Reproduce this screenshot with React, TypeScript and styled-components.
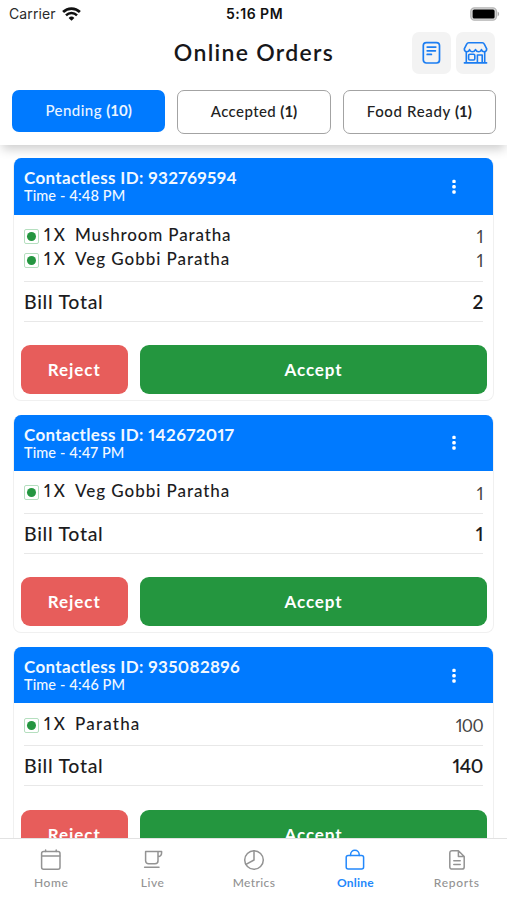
import React from "react";
import styled, { createGlobalStyle } from "styled-components";

const Global = createGlobalStyle`
  * { box-sizing: border-box; }
  body { margin: 0; background: #fff; font-family: Lato, sans-serif; font-variant-numeric: proportional-nums; }
  button { font-family: inherit; border: 0; padding: 0; cursor: pointer; }
`;

const BLUE = "#007aff";

const Screen = styled.div`
  width: 507px;
  height: 900px;
  display: flex;
  flex-direction: column;
  overflow: hidden;
  color: #1c1c1e;
  background: #fff;
`;

const Header = styled.header`
  flex: none;
  height: 145px;
  position: relative;
  z-index: 1;
  background: #fff;
  box-shadow: 0 6px 10px -2px rgba(0, 0, 0, 0.2);
`;

const StatusBar = styled.div`
  height: 27px;
  padding: 0 7px 0 9px;
  display: grid;
  grid-template-columns: 1fr auto 1fr;
  align-items: center;
  font: 14px Inter, sans-serif;
`;

const Carrier = styled.span`
  display: flex;
  align-items: center;
  gap: 6px;
  letter-spacing: 0.1px;
  color: #2b2b2b;
`;

const Clock = styled.span`
  font-weight: 600;
  letter-spacing: 0.5px;
  color: #111;
`;

const BatterySlot = styled.span`
  display: flex;
  justify-content: flex-end;
`;

const TitleRow = styled.div`
  height: 51px;
  padding: 0 12px;
  display: grid;
  grid-template-columns: 83px 1fr 83px;
  align-items: center;
`;

const Title = styled.h1`
  grid-column: 2;
  margin: -2px 0 0 1px;
  text-align: center;
  font-size: 23px;
  line-height: 28px;
  font-weight: 600;
  letter-spacing: 1.3px;
  color: #17171a;
`;

const Actions = styled.div`
  display: flex;
  gap: 5px;
`;

const IconButton = styled.button`
  width: 39px;
  height: 42px;
  display: grid;
  place-items: center;
  border-radius: 7px;
  background: #f3f3f3;
  color: #1b7df2;
`;

const Tabs = styled.nav`
  padding: 12px 11px 0 12px;
  display: grid;
  grid-template-columns: repeat(3, 1fr);
  column-gap: 12px;
  align-items: start;
`;

const Tab = styled.button<{ $active?: boolean; $spacing: number }>`
  height: ${(p) => (p.$active ? 41.5 : 44)}px;
  padding: 0 0 2px;
  border-radius: 7px;
  border: ${(p) => (p.$active ? "0" : "1px solid #a3a3a3")};
  background: ${(p) => (p.$active ? BLUE : "#fff")};
  color: ${(p) => (p.$active ? "#eaf4ff" : "#222")};
  font-size: 15px;
  font-weight: 500;
  letter-spacing: ${(p) => p.$spacing}px;
`;

const Count = styled.b`
  font-weight: 700;
  letter-spacing: 0;
`;

const List = styled.main`
  flex: 1;
  min-height: 0;
  overflow: hidden;
  padding: 13.3px 13px 0;
  display: flex;
  flex-direction: column;
  gap: 14px;
`;

const Card = styled.article`
  flex: none;
  border: 1px solid #f0f0f0;
  border-top: 0;
  border-radius: 8px;
  overflow: hidden;
  padding-bottom: 6px;
`;

const CardHead = styled.div`
  height: 56.3px;
  padding: 9px 36px 0 10px;
  display: flex;
  justify-content: space-between;
  background: ${BLUE};
  color: #f1f8ff;
`;

const OrderId = styled.div`
  font-size: 17px;
  line-height: 21px;
  font-weight: 700;
  letter-spacing: 0.35px;
`;

const OrderTime = styled.div`
  font-size: 14.5px;
  line-height: 16px;
  font-weight: 500;
  letter-spacing: 0.1px;
`;

const Dots = styled.svg`
  margin-top: 10.5px;
`;

const Items = styled.div`
  margin: 0 10px;
  padding: 7.7px 0 9.8px;
  border-bottom: 1.5px solid #e8e8e8;
`;

const Item = styled.div`
  height: 24.3px;
  display: flex;
  align-items: center;
  font-size: 17px;
  font-weight: 500;
`;

const VegMark = styled.span`
  width: 15px;
  height: 15px;
  margin-top: 4px;
  display: grid;
  place-items: center;
  border: 1px solid #b5dfbf;
  border-radius: 2px;

  &::after {
    content: "";
    width: 9px;
    height: 9px;
    border-radius: 50%;
    background: #249640;
  }
`;

const Quantity = styled.span`
  width: 31px;
  margin-left: 5px;
  letter-spacing: -0.2px;
  word-spacing: -1px;
`;

const ItemName = styled.span<{ $spacing: number }>`
  flex: 1;
  letter-spacing: ${(p) => p.$spacing}px;
`;

const ItemPrice = styled.span`
  margin-top: 4px;
  font-weight: 400;
  letter-spacing: -0.6px;
  color: #444;
`;

const Total = styled.div`
  height: 40px;
  margin: 0 10px;
  display: flex;
  justify-content: space-between;
  align-items: center;
  border-bottom: 1.5px solid #e8e8e8;
  font-size: 19.5px;
  font-weight: 500;
  letter-spacing: 0.7px;
`;

const Amount = styled.span`
  font-size: 19px;
  font-weight: 600;
  letter-spacing: -0.4px;
`;

const Buttons = styled.div`
  padding: 23.5px 6px 0 6.5px;
  display: grid;
  grid-template-columns: 107.5px 1fr;
  gap: 12px;
`;

const ActionButton = styled.button<{ $tone: string }>`
  height: 48.7px;
  border-radius: 9px;
  background: ${(p) => p.$tone};
  color: #fff;
  font-size: 17px;
  font-weight: 700;
  letter-spacing: 0.9px;
`;

const BottomNav = styled.nav`
  flex: none;
  height: 62px;
  border-top: 1px solid #e2e2e2;
  background: #fff;
  display: grid;
  grid-template-columns: repeat(5, 1fr);
`;

const NavItem = styled.a<{ $active?: boolean; $spacing: number }>`
  padding: 9px 0 0 1px;
  display: flex;
  flex-direction: column;
  align-items: center;
  gap: 3px;
  color: ${(p) => (p.$active ? "#2388fb" : "#939393")};
  font-size: 12px;
  line-height: 16px;
  font-weight: ${(p) => (p.$active ? 700 : 500)};
  letter-spacing: ${(p) => p.$spacing}px;
`;

const NavSvg = styled.svg`
  width: 24px;
  height: 24px;
  fill: none;
  stroke: currentColor;
  stroke-width: 1.5;
  stroke-linecap: round;
  stroke-linejoin: round;
`;

const Wifi = () => (
  <svg width="19" height="14" viewBox="0 0 19 14" fill="none" stroke="#111">
    <path d="M1.1 5a12 12 0 0 1 16.8 0" strokeWidth="2.7" />
    <path d="M4 8.3a7.8 7.8 0 0 1 11 0" strokeWidth="2.5" />
    <path d="M6.6 10.9a4.1 4.1 0 0 1 5.8 0L9.5 13.8z" fill="#111" stroke="none" />
  </svg>
);

const Battery = () => (
  <svg width="30" height="14" viewBox="0 0 30 14">
    <rect x=".8" y=".8" width="25.6" height="12.4" rx="3.6" fill="#ddd" stroke="#b5b5b5" strokeWidth="1.3" />
    <rect x="2.6" y="2.5" width="22" height="9" rx="1.6" fill="#000" />
    <path d="M27.6 4.6c2 .8 2 4 0 4.8z" fill="#aaa" />
  </svg>
);

const NoteIcon = () => (
  <svg width="20" height="24" viewBox="0 0 20 24" fill="none" stroke="currentColor" strokeWidth="1.7" strokeLinecap="round">
    <rect x="1.3" y="1.6" width="16.2" height="20.4" rx="3" />
    <path d="M5.2 6.1h8.6M5.2 9.8h8.2M5.2 13.4h4.2" />
  </svg>
);

const StoreIcon = () => (
  <svg width="26" height="24" viewBox="0 0 26 24" fill="none" stroke="currentColor" strokeWidth="1.6" strokeLinecap="round" strokeLinejoin="round">
    <path d="M5.7 1.8h13.6c1 0 1.6.4 2 1.4l2.4 4.6c0 1.9-1 3-2.6 3s-2.3-.9-2.7-2.2c-.4 1.4-1.4 2.2-2.9 2.2s-2.5-.8-3-2.2c-.5 1.4-1.5 2.2-3 2.2s-2.5-.8-2.9-2.2c-.4 1.3-1.1 2.2-2.7 2.2s-2.6-1.1-2.6-3l2.4-4.6c.4-1 1-1.4 2-1.4z" />
    <path d="M3.3 11v10.6M21.7 11v10.6M1.4 21.9h22.2M14.4 21.6v-7.6h4.8v7.6" />
    <rect x="5.6" y="13.2" width="6.2" height="5.8" rx="1.2" />
  </svg>
);

const HomeIcon = () => (
  <NavSvg viewBox="0 0 24 24">
    <rect x="2.6" y="3.4" width="18.4" height="17.8" rx="2" />
    <path d="M2.8 8h18M6.6 2v1.4M17.2 2v1.4" />
  </NavSvg>
);

const CupIcon = () => (
  <NavSvg viewBox="0 0 24 24">
    <path d="M4.6 3.4h12.4v9.4a3 3 0 0 1-3 3H7.6a3 3 0 0 1-3-3zM17 3.4h3.6v1.4a4 4 0 0 1-3.6 4M3.6 19.2h14.4" />
  </NavSvg>
);

const ChartIcon = () => (
  <NavSvg viewBox="0 0 24 24">
    <circle cx="12" cy="12" r="9.3" />
    <path d="M12 2.7V12l-8 4.4" />
  </NavSvg>
);

const BagIcon = () => (
  <NavSvg viewBox="0 0 24 24">
    <rect x="3.2" y="7.6" width="17.4" height="13.4" rx="2" />
    <path d="M7.6 7.4V6.6a4.3 4.3 0 0 1 8.6 0v.8" />
  </NavSvg>
);

const ReportIcon = () => (
  <NavSvg viewBox="0 0 24 24">
    <path d="M13.4 2.7H7a2.2 2.2 0 0 0-2.2 2.2v14a2.2 2.2 0 0 0 2.2 2.2h10a2.2 2.2 0 0 0 2.2-2.2V8.5zM13.4 2.7v5.8h5.8M8.8 12.8h6.4M8.8 16.6h6.4" />
  </NavSvg>
);

interface Line {
  name: string;
  price: string;
  spacing: number;
}

interface Order {
  id: string;
  time: string;
  lines: Line[];
  total: string;
}

const orders: Order[] = [
  {
    id: "932769594",
    time: "4:48 PM",
    lines: [
      { name: "Mushroom Paratha", price: "1", spacing: 0.85 },
      { name: "Veg Gobbi Paratha", price: "1", spacing: 0.95 },
    ],
    total: "2",
  },
  { id: "142672017", time: "4:47 PM", lines: [{ name: "Veg Gobbi Paratha", price: "1", spacing: 0.95 }], total: "1" },
  { id: "935082896", time: "4:46 PM", lines: [{ name: "Paratha", price: "100", spacing: 1.2 }], total: "140" },
];

const OrderCard = ({ order }: { order: Order }) => (
  <Card>
    <CardHead>
      <div>
        <OrderId>Contactless ID: {order.id}</OrderId>
        <OrderTime>Time - {order.time}</OrderTime>
      </div>
      <Dots width="6" height="18" viewBox="0 0 6 18" fill="#fff">
        <rect x="1.3" y="1.7" width="3.4" height="3.4" rx="1.2" />
        <rect x="1.3" y="7" width="3.4" height="3.4" rx="1.2" />
        <rect x="1.3" y="12.3" width="3.4" height="3.4" rx="1.2" />
      </Dots>
    </CardHead>
    <Items>
      {order.lines.map((line) => (
        <Item key={line.name}>
          <VegMark />
          <Quantity>1 X</Quantity>
          <ItemName $spacing={line.spacing}>{line.name}</ItemName>
          <ItemPrice>{line.price}</ItemPrice>
        </Item>
      ))}
    </Items>
    <Total>
      Bill Total <Amount>{order.total}</Amount>
    </Total>
    <Buttons>
      <ActionButton $tone="#e75d5b">Reject</ActionButton>
      <ActionButton $tone="#24963f">Accept</ActionButton>
    </Buttons>
  </Card>
);

export default function App() {
  return (
    <Screen>
      <Global />
      <Header>
        <StatusBar>
          <Carrier>
            Carrier <Wifi />
          </Carrier>
          <Clock>5:16 PM</Clock>
          <BatterySlot>
            <Battery />
          </BatterySlot>
        </StatusBar>
        <TitleRow>
          <Title>Online Orders</Title>
          <Actions>
            <IconButton aria-label="Order notes">
              <NoteIcon />
            </IconButton>
            <IconButton aria-label="Store">
              <StoreIcon />
            </IconButton>
          </Actions>
        </TitleRow>
        <Tabs>
          <Tab $active $spacing={0.45}>
            Pending <Count>(10)</Count>
          </Tab>
          <Tab $spacing={0.4}>
            Accepted <Count>(1)</Count>
          </Tab>
          <Tab $spacing={0.65}>
            Food Ready <Count>(1)</Count>
          </Tab>
        </Tabs>
      </Header>
      <List>
        {orders.map((order) => (
          <OrderCard key={order.id} order={order} />
        ))}
      </List>
      <BottomNav>
        <NavItem $spacing={0.6}>
          <HomeIcon />
          Home
        </NavItem>
        <NavItem $spacing={0.5}>
          <CupIcon />
          Live
        </NavItem>
        <NavItem $spacing={0.4}>
          <ChartIcon />
          Metrics
        </NavItem>
        <NavItem $active $spacing={0.2}>
          <BagIcon />
          Online
        </NavItem>
        <NavItem $spacing={0.7}>
          <ReportIcon />
          Reports
        </NavItem>
      </BottomNav>
    </Screen>
  );
}
